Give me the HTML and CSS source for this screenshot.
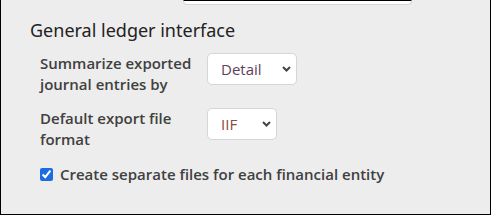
FILE: index.html
```html
<!DOCTYPE html>
<html lang="en">
<head>
    <meta charset="UTF-8">
    <title>General ledger interface</title>
    <link rel="stylesheet" href="styles.css">
</head>
<body>
    <div class="frame">
        <div class="top-input"></div>

        <section class="panel">
            <h2>General ledger interface</h2>

            <div class="row">
                <label class="label" for="summarize">Summarize exported journal entries by</label>
                <select id="summarize" class="select select-detail">
                    <option>Detail</option>
                    <option>Summary</option>
                </select>
            </div>

            <div class="row">
                <label class="label" for="format">Default export file format</label>
                <select id="format" class="select select-iif">
                    <option>IIF</option>
                    <option>CSV</option>
                </select>
            </div>

            <label class="check">
                <input type="checkbox" checked>
                <span>Create separate files for each financial entity</span>
            </label>
        </section>
    </div>
</body>
</html>
```

FILE: styles.css
```css
/* Page */
html, body {
    margin: 0;
    padding: 0;
}

body {
    width: 491px;
    height: 215px;
    overflow: hidden;
    background: #ededed;
    font-family: "Open Sans", Arial, sans-serif;
}

.frame {
    position: relative;
    box-sizing: border-box;
    width: 491px;
    height: 215px;
    border: 1px solid #000;
    border-top: none;
    background: #ededed;
}

/* Cut-off input at the top edge */
.top-input {
    position: absolute;
    top: 0;
    left: 182px;
    width: 229px;
    height: 5px;
    box-sizing: border-box;
    background: #fff;
    border: 1px solid #d6d6d6;
    border-top: 1px solid #000;
    border-radius: 0 0 4px 4px;
}

/* Panel */
.panel {
    padding: 18px 0 0 29px;
}

h2 {
    margin: 0 0 11px 0;
    font-family: "Noto Sans", "Open Sans", sans-serif;
    font-weight: 400;
    font-size: 18px;
    line-height: 24px;
    color: #222;
}

.row {
    display: flex;
    align-items: flex-start;
    padding-left: 10px;
    margin-bottom: 14px;
}

.label {
    width: 167px;
    flex-shrink: 0;
    font-size: 15px;
    font-weight: 600;
    line-height: 20.5px;
    color: #404040;
}

/* Selects */
.select {
    appearance: none;
    box-sizing: border-box;
    height: 32px;
    margin: 0;
    padding: 0 0 0 13px;
    border: 1px solid #d6d6d6;
    border-radius: 5px;
    background-color: #fff;
    background-image: url("data:image/svg+xml,%3Csvg xmlns='http://www.w3.org/2000/svg' width='9' height='6' viewBox='0 0 9 6'%3E%3Cpath d='M1 1 4.5 4.5 8 1' fill='none' stroke='%23444' stroke-width='2'/%3E%3C/svg%3E");
    background-repeat: no-repeat;
    background-position: right 5px center;
    font-family: "Open Sans", Arial, sans-serif;
    font-size: 15px;
}

.select-detail {
    width: 90px;
    color: #5c3f5c;
}

.select-iif {
    width: 70px;
    color: #8a4b3a;
}

/* Checkbox */
.check {
    display: flex;
    align-items: center;
    gap: 7px;
    padding-left: 10px;
    height: 21px;
    font-size: 15px;
    font-weight: 600;
    color: #404040;
}

.check input {
    width: 13px;
    height: 13px;
    margin: 1px 0 0 0;
    accent-color: #1a6de0;
}
```
